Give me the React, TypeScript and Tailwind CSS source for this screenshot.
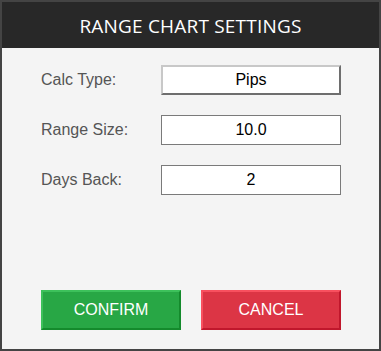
export default function App() {
  const rows = [
    { label: "Calc Type:", value: "Pips", select: true },
    { label: "Range Size:", value: "10.0", select: false },
    { label: "Days Back:", value: "2", select: false },
  ];

  return (
    <div className="w-[381px] h-[351px] border-2 border-[#444444] bg-[#f4f4f4] flex flex-col">
      <div className="h-[46px] bg-[#282828] flex items-center justify-center pt-[3px]">
        <h1 className="text-white text-[19px] tracking-[0.2px]" style={{ fontFamily: '"Open Sans", "DejaVu Sans", sans-serif' }}>
          RANGE CHART SETTINGS
        </h1>
      </div>
      <div className="flex-1 flex flex-col pt-[17px] pl-[39px] pr-[38px] pb-[19px]" style={{ fontFamily: '"Liberation Sans", Arial, sans-serif' }}>
        <div className="flex flex-col gap-[20px]">
          {rows.map((r) => (
            <div key={r.label} className="flex items-center justify-between h-[30px]">
              <span className="text-[16px] text-[#555555]">{r.label}</span>
              {r.select ? (
                <div className="w-[180px] h-[30px] bg-white border-2 border-t-[#c8c8c8] border-l-[#c8c8c8] border-b-[#6e6e6e] border-r-[#6e6e6e] flex items-center justify-center text-[16px] text-black">
                  {r.value}
                </div>
              ) : (
                <div className="w-[180px] h-[30px] bg-white border border-[#7a7a7a] flex items-center justify-center text-[16px] text-black">
                  {r.value}
                </div>
              )}
            </div>
          ))}
        </div>
        <div className="mt-auto flex justify-between">
          <button className="w-[140px] h-[40px] bg-[#28a745] border-2 border-t-[#3dc15b] border-l-[#3dc15b] border-b-[#148a2c] border-r-[#148a2c] text-white text-[16px]">
            CONFIRM
          </button>
          <button className="w-[140px] h-[40px] bg-[#dc3545] border-2 border-t-[#f8505f] border-l-[#f8505f] border-b-[#c0172c] border-r-[#c0172c] text-white text-[16px]">
            CANCEL
          </button>
        </div>
      </div>
    </div>
  );
}
